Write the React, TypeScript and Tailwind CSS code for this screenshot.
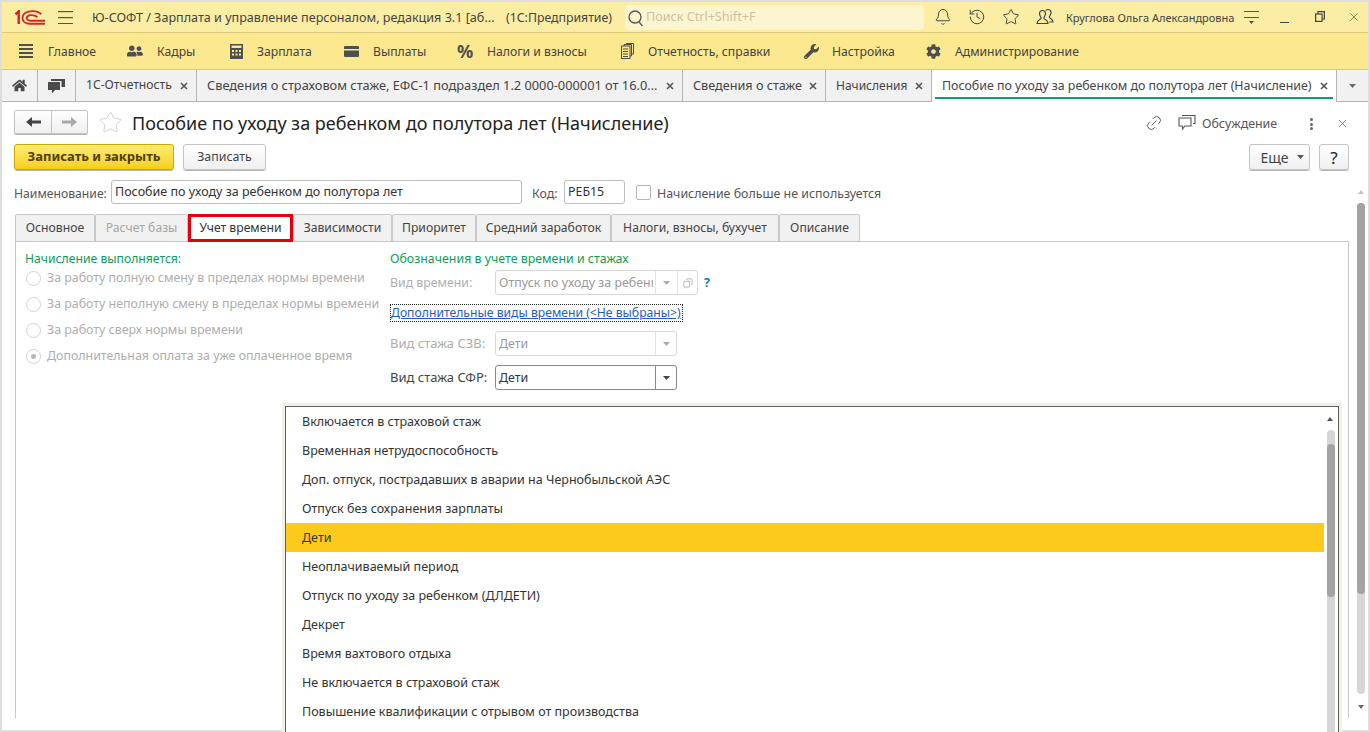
import { Bell, Copy, History, Link2, Star, X } from "lucide-react";
import { FaCog, FaHome, FaUserFriends, FaWrench } from "react-icons/fa";

const menu = [
  { label: "Главное", iconX: 18, textX: 48, icon: "lines" },
  { label: "Кадры", iconX: 127, textX: 157, icon: "users" },
  { label: "Зарплата", iconX: 228, textX: 257, icon: "calc" },
  { label: "Выплаты", iconX: 343, textX: 373, icon: "wallet" },
  { label: "Налоги и взносы", iconX: 457, textX: 487, icon: "percent" },
  { label: "Отчетность, справки", iconX: 619, textX: 648, icon: "report" },
  { label: "Настройка", iconX: 803, textX: 832, icon: "wrench" },
  { label: "Администрирование", iconX: 925, textX: 955, icon: "gear" },
];

const openTabs = [
  { label: "1С-Отчетность", width: 121, text: "text-[12.15px]" },
  { label: "Сведения о страховом стаже, ЕФС-1 подраздел 1.2 0000-000001 от 16.0...", width: 486, text: "text-[12.8px]" },
  { label: "Сведения о стаже", width: 143, text: "text-[12.65px]" },
  { label: "Начисления", width: 106, text: "text-[12px]" },
];

const formTabs = [
  { label: "Основное", width: 80 },
  { label: "Расчет базы", width: 93, disabled: true },
  { label: "Учет времени", width: 105, active: true },
  { label: "Зависимости", width: 99 },
  { label: "Приоритет", width: 84 },
  { label: "Средний заработок", width: 135 },
  { label: "Налоги, взносы, бухучет", width: 168 },
  { label: "Описание", width: 81 },
];

const radios = [
  "За работу полную смену в пределах нормы времени",
  "За работу неполную смену в пределах нормы времени",
  "За работу сверх нормы времени",
  "Дополнительная оплата за уже оплаченное время",
];

const options = [
  "Включается в страховой стаж",
  "Временная нетрудоспособность",
  "Доп. отпуск, пострадавших в аварии на Чернобыльской АЭС",
  "Отпуск без сохранения зарплаты",
  "Дети",
  "Неоплачиваемый период",
  "Отпуск по уходу за ребенком (ДЛДЕТИ)",
  "Декрет",
  "Время вахтового отдыха",
  "Не включается в страховой стаж",
  "Повышение квалификации с отрывом от производства",
];

function MenuIcon({ name }: { name: string }) {
  const color = "#4f4f4f";
  if (name === "lines")
    return (
      <svg width="16" height="16" viewBox="0 0 16 16" fill={color}>
        <rect x="1" y="1" width="14" height="2" />
        <rect x="1" y="5" width="14" height="2" />
        <rect x="1" y="9" width="14" height="2" />
        <rect x="1" y="13" width="14" height="2" />
      </svg>
    );
  if (name === "users") return <FaUserFriends size={18} color={color} />;
  if (name === "calc")
    return (
      <svg width="13" height="15" viewBox="0 0 13 15" fill={color}>
        <path fillRule="evenodd" d="M0 0h13v15H0zM1.5 1.5v2.5h10V1.5zM2 6v2h2V6zm3.5 0v2h2V6zM9 6v2h2V6zM2 9.5v2h2v-2zm3.5 0v2h2v-2zm3.5 0v2h2v-2z" />
      </svg>
    );
  if (name === "wallet")
    return (
      <svg width="15" height="11" viewBox="0 0 15 11" fill={color}>
        <path d="M1 0h13a1 1 0 0 1 1 1v2H0V1a1 1 0 0 1 1-1z" />
        <path d="M0 4.5h15V10a1 1 0 0 1-1 1H1a1 1 0 0 1-1-1z" />
      </svg>
    );
  if (name === "percent") return <span className="text-[18px] font-bold leading-none text-[#4f4f4f]">%</span>;
  if (name === "report")
    return (
      <svg width="13" height="16" viewBox="0 0 13 16" fill="none" stroke={color} strokeWidth="1">
        <rect x="0.5" y="3" width="8.5" height="12.5" />
        <path d="M3 3V1.5h7.5V13H9M5.5 1.5V.5h7V11h-2M2 6h5M2 8.5h5M2 11h5M2 13.5h5" />
      </svg>
    );
  if (name === "wrench") return <FaWrench size={15} color={color} />;
  return <FaCog size={15} color={color} />;
}

function ComboArrow({ color = "#6b6b6b" }: { color?: string }) {
  return (
    <svg width="7" height="4" viewBox="0 0 7 4" fill={color}>
      <path d="M0 0h7L3.5 4z" />
    </svg>
  );
}

function CloseMark() {
  return (
    <svg width="8" height="8" viewBox="0 0 8 8" stroke="#555" strokeWidth="1.6" fill="none">
      <path d="M1 1l6 6M7 1L1 7" />
    </svg>
  );
}

export default function App() {
  return (
    <div className="relative h-[732px] w-[1370px] overflow-hidden bg-white font-['Liberation_Sans',Arial,sans-serif] text-[12.4px] text-[#3f3f3f]">
      {/* window frame */}
      <div className="absolute inset-x-0 top-0 z-30 h-[2px] bg-[#dedede]" />
      <div className="absolute bottom-0 left-0 top-0 z-30 w-[2px] bg-[#dedede]" />
      <div className="absolute bottom-0 right-0 top-0 z-30 w-[2px] bg-[#dedede]" />
      <div className="absolute inset-x-0 bottom-0 h-[2px] bg-[#dedede]" />

      {/* title bar */}
      <div className="absolute left-0 top-[2px] h-[31px] w-full border-b border-[#dcc979] bg-[#fbeda3]">
        <svg className="absolute left-[14px] top-[8px]" width="31" height="15" viewBox="0 0 33 16" fill="none" stroke="#d6262a">
          <path d="M1.5 4.5L5 1.5V15" strokeWidth="2.6" />
          <path d="M29 4.5C26 1.5 21 .8 16.5 1.5 11.5 2.5 9 5 9 8.5s3 6.2 8 6.2h16" strokeWidth="2" />
          <path d="M25 7.5c-2-1.5-5-2.3-7.5-2-2.5.4-4 1.6-4 3s2 3 5 3H33" strokeWidth="2" />
        </svg>
        <svg className="absolute left-[58px] top-[9px]" width="15" height="13" viewBox="0 0 15 13" fill="#555">
          <rect y="0" width="15" height="1.2" />
          <rect y="6" width="15" height="1.2" />
          <rect y="12" width="15" height="1.2" />
        </svg>
        <span className="absolute left-[92px] top-[8px] text-[12.6px] leading-[15px] text-[#444]">
          Ю-СОФТ / Зарплата и управление персоналом, редакция 3.1 [аб...
        </span>
        <span className="absolute left-[506px] top-[8px] text-[12.3px] leading-[15px] text-[#444]">(1С:Предприятие)</span>
        <div className="absolute left-[625px] top-[3px] flex h-[25px] w-[299px] items-center rounded-[3px] bg-[#fdf5cf]">
          <svg className="ml-[2px]" width="17" height="18" viewBox="0 0 17 18" fill="none" stroke="#555" strokeWidth="1.3">
            <circle cx="8" cy="8" r="6" />
            <path d="M12 13l3.5 4" />
          </svg>
          <span className="ml-[2px] text-[12.6px] text-[#c9c3a4]">Поиск Ctrl+Shift+F</span>
        </div>
        <Bell className="absolute left-[934px] top-[6px]" size={18} strokeWidth={1.3} color="#444" />
        <History className="absolute left-[968px] top-[6px]" size={18} strokeWidth={1.3} color="#444" />
        <Star className="absolute left-[1002px] top-[6px]" size={18} strokeWidth={1.3} color="#444" />
        <svg className="absolute left-[1036px] top-[6px]" width="18" height="18" viewBox="0 0 18 18" fill="none" stroke="#444" strokeWidth="1.2">
          <path d="M1 15.5c0-3 2-3.5 3.5-4.5.8-.6.8-1.5.2-2.2C3.8 7.6 3.5 6.5 3.5 5.5 3.5 3.5 5 2.5 6.5 2.5S9.5 3.5 9.500 5.500c0 1-.3 2.100-1.200 3.300-.6.7-.6 1.600.2 2.200 1.500 1 3.500 1.500 3.500 4.500z" />
          <path d="M10 2.5c.5-.8 1.200-1 2-1 1.500 0 3 1 3 3 0 1-.3 2.100-1.200 3.300-.6.7-.6 1.600.2 2.200 1.500 1 3 1.500 3 4h-4" />
        </svg>
        <span className="absolute left-[1066px] top-[8px] text-[11px] leading-[15px] text-[#444]">Круглова Ольга Александровна</span>
        <svg className="absolute left-[1244px] top-[8px]" width="15" height="15" viewBox="0 0 15 15" fill="#555">
          <rect y="1" width="15" height="1" />
          <rect y="7" width="15" height="1" />
          <path d="M5 11h5l-2.5 3z" />
        </svg>
        <div className="absolute left-[1280px] top-[20px] h-[1px] w-[9px] bg-[#444]" />
        <svg className="absolute left-[1315px] top-[9px]" width="10" height="11" viewBox="0 0 10 11" fill="none" stroke="#444" strokeWidth="1.2">
          <rect x="0.6" y="3" width="6.5" height="7.4" />
          <path d="M3 3V.6h6.4V8H7" />
        </svg>
        <X className="absolute left-[1347px] top-[8px]" size={14} strokeWidth={1} color="#444" />
      </div>

      {/* section menu */}
      <div className="absolute left-0 top-[33px] h-[37px] w-full border-b border-[#dcc979] bg-[#fbe88f]">
        {menu.map((item) => (
          <div key={item.label}>
            <span className="absolute top-[9px] flex h-[18px] w-[16px] items-center justify-center" style={{ left: item.iconX }}>
              <MenuIcon name={item.icon} />
            </span>
            <span className="absolute top-[11px] text-[12.2px] leading-[15px] text-[#444]" style={{ left: item.textX }}>
              {item.label}
            </span>
          </div>
        ))}
      </div>

      {/* open windows */}
      <div className="absolute left-0 top-[70px] flex h-[32px] w-full border-b border-[#b5b5b5] bg-[#f1f1f1]">
        <div className="flex w-[38px] items-center justify-center border-r border-[#b5b5b5] pl-[2px]">
          <FaHome size={15} color="#4a4a4a" />
        </div>
        <div className="flex w-[38px] items-center justify-center border-r border-[#b5b5b5]">
          <svg width="17" height="16" viewBox="0 0 17 16" fill="#4a4a4a">
            <path d="M0 4h12v8H7l-3 3.5V12H0z" />
            <path d="M3 3V1h14v8h-3.500V3z" />
          </svg>
        </div>
        {openTabs.map((tab) => (
          <div
            key={tab.label}
            className="flex items-center justify-between border-r border-[#b5b5b5] pl-[10px] pr-[8px] text-[#444]"
            style={{ width: tab.width }}
          >
            <span className={`whitespace-nowrap ${tab.text}`}>{tab.label}</span>
            <CloseMark />
          </div>
        ))}
        <div className="relative flex h-[32px] w-[405px] items-center justify-between border-r border-[#b5b5b5] bg-white pl-[10px] pr-[8px] text-[#444]">
          <span className="whitespace-nowrap">Пособие по уходу за ребенком до полутора лет (Начисление)</span>
          <CloseMark />
          <div className="absolute bottom-[3px] left-[3px] right-[3px] h-[2px] bg-[#0f9d6e]" />
        </div>
        <div className="flex flex-1 items-center justify-center pr-[2px]">
          <ComboArrow />
        </div>
      </div>

      {/* form header */}
      <div className="absolute left-[14px] top-[110px] flex h-[24px] w-[74px] rounded-[2px] border border-[#c4c4c4] bg-gradient-to-b from-white to-[#efefef] shadow-[0_1px_0_#b5b5b5]">
        <div className="flex w-[37px] items-center justify-center border-r border-[#c4c4c4]">
          <svg width="15" height="10" viewBox="0 0 15 10" fill="#444">
            <path d="M0 5l6-5v3.5h9v3H6V10z" />
          </svg>
        </div>
        <div className="flex flex-1 items-center justify-center">
          <svg width="15" height="10" viewBox="0 0 15 10" fill="#a8a8a8">
            <path d="M15 5L9 0v3.5H0v3h9V10z" />
          </svg>
        </div>
      </div>
      <Star className="absolute left-[98px] top-[110px]" size={25} strokeWidth={0.8} color="#c8c8c8" />
      <h1 className="absolute left-[132px] top-[112px] whitespace-nowrap text-[18px] leading-[22px] text-[#222]">
        Пособие по уходу за ребенком до полутора лет (Начисление)
      </h1>
      <Link2 className="absolute left-[1145px] top-[114px] -rotate-45" size={18} strokeWidth={1.2} color="#555" />
      <svg className="absolute left-[1178px] top-[114px]" width="18" height="18" viewBox="0 0 18 18" fill="none" stroke="#555" strokeWidth="1.1">
        <path d="M1 4h12v8H7l-2.5 3v-3H1z" />
        <path d="M4 1.5h13v8h-2" />
      </svg>
      <span className="absolute left-[1202px] top-[116px] leading-[15px] text-[#555]">Обсуждение</span>
      <div className="absolute left-[1310px] top-[118px] flex h-[12px] w-[3px] flex-col justify-between">
        <i className="block h-[3px] w-[3px] rounded-full bg-[#666]" />
        <i className="block h-[3px] w-[3px] rounded-full bg-[#666]" />
        <i className="block h-[3px] w-[3px] rounded-full bg-[#666]" />
      </div>
      <X className="absolute left-[1336px] top-[117px]" size={13} strokeWidth={1.3} color="#555" />

      {/* command bar */}
      <button className="absolute left-[14px] top-[144px] h-[26px] w-[160px] rounded-[3px] border border-[#c9a800] bg-gradient-to-b from-[#ffec6e] to-[#f7cf0d] text-[13px] font-bold text-[#4a4000] shadow-[0_1px_0_#b8b8b8]">
        Записать и закрыть
      </button>
      <button className="absolute left-[183px] top-[144px] h-[26px] w-[83px] rounded-[3px] border border-[#c4c4c4] bg-gradient-to-b from-white to-[#f0f0f0] text-[#444] shadow-[0_1px_0_#b5b5b5]">
        Записать
      </button>
      <button className="absolute left-[1249px] top-[144px] flex h-[26px] w-[61px] items-center justify-center gap-[8px] rounded-[3px] border border-[#c4c4c4] bg-gradient-to-b from-white to-[#f0f0f0] pl-[5px] text-[14px] text-[#444] shadow-[0_1px_0_#b5b5b5]">
        Еще
        <ComboArrow color="#555" />
      </button>
      <button className="absolute left-[1319px] top-[144px] h-[26px] w-[30px] rounded-[3px] border border-[#c4c4c4] bg-gradient-to-b from-white to-[#f0f0f0] text-[17px] text-[#222] shadow-[0_1px_0_#b5b5b5]">
        ?
      </button>

      {/* name row */}
      <span className="absolute left-[14px] top-[186px] text-[12.2px] leading-[15px] text-[#555]">Наименование:</span>
      <div className="absolute left-[111px] top-[180px] flex h-[24px] w-[411px] items-center rounded-[3px] border border-[#bdbdbd] pl-[3px] pt-[1px] text-[12.5px] text-[#333]">
        Пособие по уходу за ребенком до полутора лет
      </div>
      <span className="absolute left-[532px] top-[186px] leading-[15px] text-[#555]">Код:</span>
      <div className="absolute left-[564px] top-[180px] flex h-[24px] w-[61px] items-center rounded-[3px] border border-[#bdbdbd] pl-[3px] pt-[1px] text-[#333]">
        РЕБ15
      </div>
      <div className="absolute left-[636px] top-[185px] h-[15px] w-[15px] rounded-[2px] border border-[#b5b5b5] bg-white" />
      <span className="absolute left-[657px] top-[186px] leading-[15px] text-[#555]">Начисление больше не используется</span>

      {/* form tabs */}
      <div className="absolute left-[15px] top-[214px] flex h-[28px] text-[12.2px]">
        {formTabs.map((tab) => (
          <div
            key={tab.label}
            className={
              tab.active
                ? "z-10 flex h-[28px] items-center justify-center border-[3px] border-[#e2000f] bg-white text-[#333]"
                : tab.disabled
                  ? "flex h-[28px] items-center justify-center rounded-t-[2px] border border-[#c8c8c8] bg-[#f1f1f1] text-[#a6a6a6]"
                  : "flex h-[28px] items-center justify-center rounded-t-[2px] border border-[#c8c8c8] bg-[#f1f1f1] text-[#444]"
            }
            style={{ width: tab.width }}
          >
            {tab.label}
          </div>
        ))}
      </div>

      {/* tab page */}
      <div className="absolute left-[15px] top-[241px] h-[477px] w-[1334px] border-l border-r border-t border-[#c8c8c8]" />
      <span className="absolute left-[25px] top-[251px] text-[12.2px] leading-[15px] text-[#0f9d58]">Начисление выполняется:</span>
      <div className="absolute left-[26px] top-[265px] flex flex-col">
        {radios.map((label, i) => (
          <div key={label} className="flex h-[26px] items-center gap-[6px]">
            <span className="flex h-[15px] w-[15px] items-center justify-center rounded-full border border-[#d2d2d2]">
              {i === 3 && <i className="block h-[5px] w-[5px] rounded-full bg-[#b8b8b8]" />}
            </span>
            <span className="whitespace-nowrap pt-[1px] text-[#aeaeae]">{label}</span>
          </div>
        ))}
      </div>

      <span className="absolute left-[390px] top-[251px] leading-[15px] text-[#0f9d58]">Обозначения в учете времени и стажах</span>
      <span className="absolute left-[390px] top-[275px] text-[12.3px] leading-[15px] text-[#aeaeae]">Вид времени:</span>
      <div className="absolute left-[495px] top-[270px] flex h-[25px] w-[203px] rounded-[3px] border border-[#d8d8d8] text-[#9a9a9a]">
        <span className="w-[159px] pl-[3px]">
          <span className="block w-[154px] overflow-hidden whitespace-nowrap leading-[23px]">Отпуск по уходу за ребенком</span>
        </span>
        <span className="flex w-[22px] items-center justify-center border-l border-[#e2e2e2]">
          <ComboArrow color="#aaa" />
        </span>
        <span className="flex flex-1 items-center justify-center border-l border-[#e2e2e2]">
          <Copy className="-scale-x-100" size={10} strokeWidth={1.4} color="#888" />
        </span>
      </div>
      <span className="absolute left-[704px] top-[275px] font-bold leading-[15px] text-[#0c7da8]">?</span>
      <a className="absolute left-[390px] top-[304px] h-[18px] w-[293px] whitespace-nowrap border border-dotted border-[#222] text-[12.2px] leading-[16px] text-[#1f5fb4] underline">
        Дополнительные виды времени (&lt;Не выбраны&gt;)
      </a>
      <span className="absolute left-[390px] top-[336px] text-[13px] leading-[15px] text-[#aeaeae]">Вид стажа СЗВ:</span>
      <div className="absolute left-[495px] top-[331px] flex h-[25px] w-[182px] rounded-[3px] border border-[#d8d8d8] text-[#9a9a9a]">
        <span className="w-[159px] pl-[3px] leading-[23px]">Дети</span>
        <span className="flex flex-1 items-center justify-center border-l border-[#e2e2e2]">
          <ComboArrow color="#aaa" />
        </span>
      </div>
      <span className="absolute left-[390px] top-[370px] text-[13px] leading-[15px] text-[#444]">Вид стажа СФР:</span>
      <div className="absolute left-[495px] top-[365px] flex h-[25px] w-[182px] rounded-[3px] border border-[#8a8a8a] text-[#333]">
        <span className="w-[159px] pl-[3px] leading-[23px]">Дети</span>
        <span className="flex flex-1 items-center justify-center border-l border-[#8a8a8a]">
          <ComboArrow color="#444" />
        </span>
      </div>

      {/* page scrollbar */}
      <div className="absolute left-[1358px] top-[190px] h-0 w-0 border-x-[3.5px] border-b-[4px] border-x-transparent border-b-[#c4c4c4]" />
      <div className="absolute left-[1357px] top-[203px] h-[491px] w-[8px] rounded-[4px] bg-[#d6d6d6]" />
      <div className="absolute left-[1357px] top-[203px] h-[391px] w-[8px] rounded-[4px] bg-[#a3a3a3]" />
      <div className="absolute left-[1358px] top-[705px] h-0 w-0 border-x-[3.5px] border-t-[4px] border-x-transparent border-t-[#666]" />

      {/* dropdown list */}
      <div className="absolute left-[285px] top-[406px] h-[340px] w-[1054px] border border-[#5f5f5f] bg-white shadow-[0_0_0_3px_#f0f0e6]">
        <div className="flex w-[1038px] flex-col text-[12.5px]">
          {options.map((option) => (
            <div
              key={option}
              className={
                option === "Дети"
                  ? "flex h-[29px] items-center bg-[#fbca1d] pl-[16px] pt-[2px] text-[#333]"
                  : "flex h-[29px] items-center pl-[16px] pt-[2px] text-[#333]"
              }
            >
              {option}
            </div>
          ))}
        </div>
        <div className="absolute left-[1041px] top-[10px] h-0 w-0 border-x-[3.5px] border-b-[4px] border-x-transparent border-b-[#555]" />
        <div className="absolute left-[1041px] top-[23px] h-[320px] w-[8px] rounded-[4px] bg-[#d6d6d6]" />
        <div className="absolute left-[1041px] top-[37px] h-[153px] w-[8px] rounded-[4px] bg-[#a3a3a3]" />
      </div>
    </div>
  );
}
